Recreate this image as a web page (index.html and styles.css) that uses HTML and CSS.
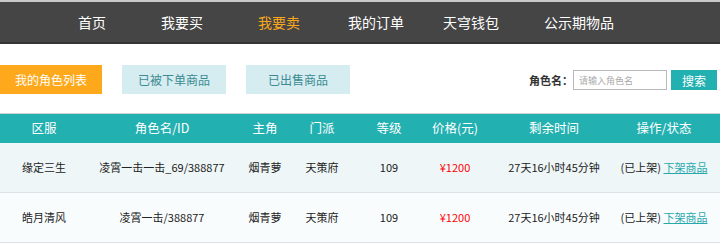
FILE: index.html
```html
<!DOCTYPE html>
<html lang="zh-CN">
<head>
    <meta charset="UTF-8">
    <title>我要卖</title>
    <link rel="stylesheet" href="styles.css">
</head>
<body>
    <nav class="nav">
        <a href="#" class="nav-item">首页</a>
        <a href="#" class="nav-item">我要买</a>
        <a href="#" class="nav-item active">我要卖</a>
        <a href="#" class="nav-item">我的订单</a>
        <a href="#" class="nav-item">天穹钱包</a>
        <a href="#" class="nav-item">公示期物品</a>
    </nav>

    <div class="toolbar">
        <div class="tabs">
            <a href="#" class="tab current">我的角色列表</a>
            <a href="#" class="tab">已被下单商品</a>
            <a href="#" class="tab">已出售商品</a>
        </div>
        <form class="search" action="#">
            <label for="input-role">角色名：</label>
            <input type="text" id="input-role" placeholder="请输入角色名">
            <button type="button">搜索</button>
        </form>
    </div>

    <table class="list">
        <thead>
            <tr>
                <th class="c1">区服</th>
                <th class="c2">角色名/ID</th>
                <th class="c3">主角</th>
                <th class="c4">门派</th>
                <th class="c5">等级</th>
                <th class="c6">价格(元)</th>
                <th class="c7">剩余时间</th>
                <th class="c8">操作/状态</th>
            </tr>
        </thead>
        <tbody>
            <tr class="odd">
                <td>缘定三生</td>
                <td>凌霄一击一击_69/388877</td>
                <td>烟青萝</td>
                <td>天策府</td>
                <td>109</td>
                <td class="price">¥1200</td>
                <td class="c7">27天16小时45分钟</td>
                <td class="c8">(已上架) <a href="#">下架商品</a></td>
            </tr>
            <tr>
                <td>皓月清风</td>
                <td>凌霄一击/388877</td>
                <td>烟青萝</td>
                <td>天策府</td>
                <td>109</td>
                <td class="price">¥1200</td>
                <td class="c7">27天16小时45分钟</td>
                <td class="c8">(已上架) <a href="#">下架商品</a></td>
            </tr>
        </tbody>
    </table>
</body>
</html>
```

FILE: styles.css
```css
*,
*::after,
*::before{
    padding: 0;
    margin: 0;
    box-sizing: border-box;
}
html{
    font: normal 12px/1.5 "Noto Sans CJK SC", "Liberation Sans", sans-serif;
    color: #333;
}
body{
    width: 720px;
    background: #fff;
}
a{
    text-decoration: none;
}

/* top nav */
.nav{
    display: flex;
    height: 44px;
    padding-left: 52px;
    background: #454545;
    border-top: 2px solid #c9c9c9;
    border-bottom: 2px solid #363636;
}
.nav-item{
    display: flex;
    align-items: center;
    justify-content: center;
    color: #fff;
    font-size: 14px;
}
.nav-item:nth-child(1){ width: 80px; }
.nav-item:nth-child(2){ width: 100px; }
.nav-item:nth-child(3){ width: 94px; }
.nav-item:nth-child(4){ width: 100px; }
.nav-item:nth-child(5){ width: 90px; }
.nav-item:nth-child(6){ width: 126px; }
.nav-item.active{
    color: #f9a81c;
}

/* tabs + search */
.toolbar{
    display: flex;
    justify-content: space-between;
    align-items: flex-start;
    height: 69px;
    padding: 21px 3px 0 0;
}
.tabs{
    display: flex;
    gap: 20px;
}
.tab{
    display: flex;
    align-items: center;
    justify-content: center;
    width: 104px;
    height: 29px;
    background: #d5ecf1;
    color: #3b8b90;
    font-size: 12px;
}
.tab.current{
    width: 102px;
    background: #fea91c;
    color: #fff;
}
.search{
    display: flex;
    align-items: center;
    margin-top: 5px;
}
.search label{
    font-weight: bold;
    color: #333;
    font-size: 11px;
}
.search input{
    width: 94px;
    height: 20px;
    border: 1px solid #b9b9b9;
    padding: 0 5px;
    font: 9px "Noto Sans CJK SC", sans-serif;
    color: #333;
}
.search input::placeholder{
    color: #aaa;
}
.search button{
    width: 46px;
    height: 20px;
    margin-left: 4px;
    border: none;
    background: #22b0b1;
    color: #fff;
    font: 12px "Noto Sans CJK SC", sans-serif;
    cursor: pointer;
}

/* list */
.list{
    width: 720px;
    border-collapse: collapse;
    table-layout: fixed;
    text-align: center;
}
.list thead tr{
    background: #23b0b1;
    border-top: 1px solid #d0d0d0;
}
.list th{
    height: 29px;
    color: #fff;
    font-size: 12.5px;
    font-weight: normal;
}
.list td{
    height: 50px;
    color: #222;
    font-size: 11px;
    border-bottom: 1px solid #dde3e4;
}
.list tbody tr{
    background: #f9fcfd;
}
.list tbody tr.odd{
    background: #eef6f7;
}
.c1{ width: 88px; }
.c2{ width: 148px; }
.c3{ width: 58px; }
.c4{ width: 56px; }
.c5{ width: 78px; }
.c6{ width: 54px; }
.c7{ width: 126px; }
.c8{ width: 112px; }
.list .c7{
    padding-left: 18px;
}
.list .c8{
    white-space: nowrap;
}
.list .price{
    color: #f00;
}
.list td a{
    color: #2aa9ad;
    text-decoration: underline;
}
```
